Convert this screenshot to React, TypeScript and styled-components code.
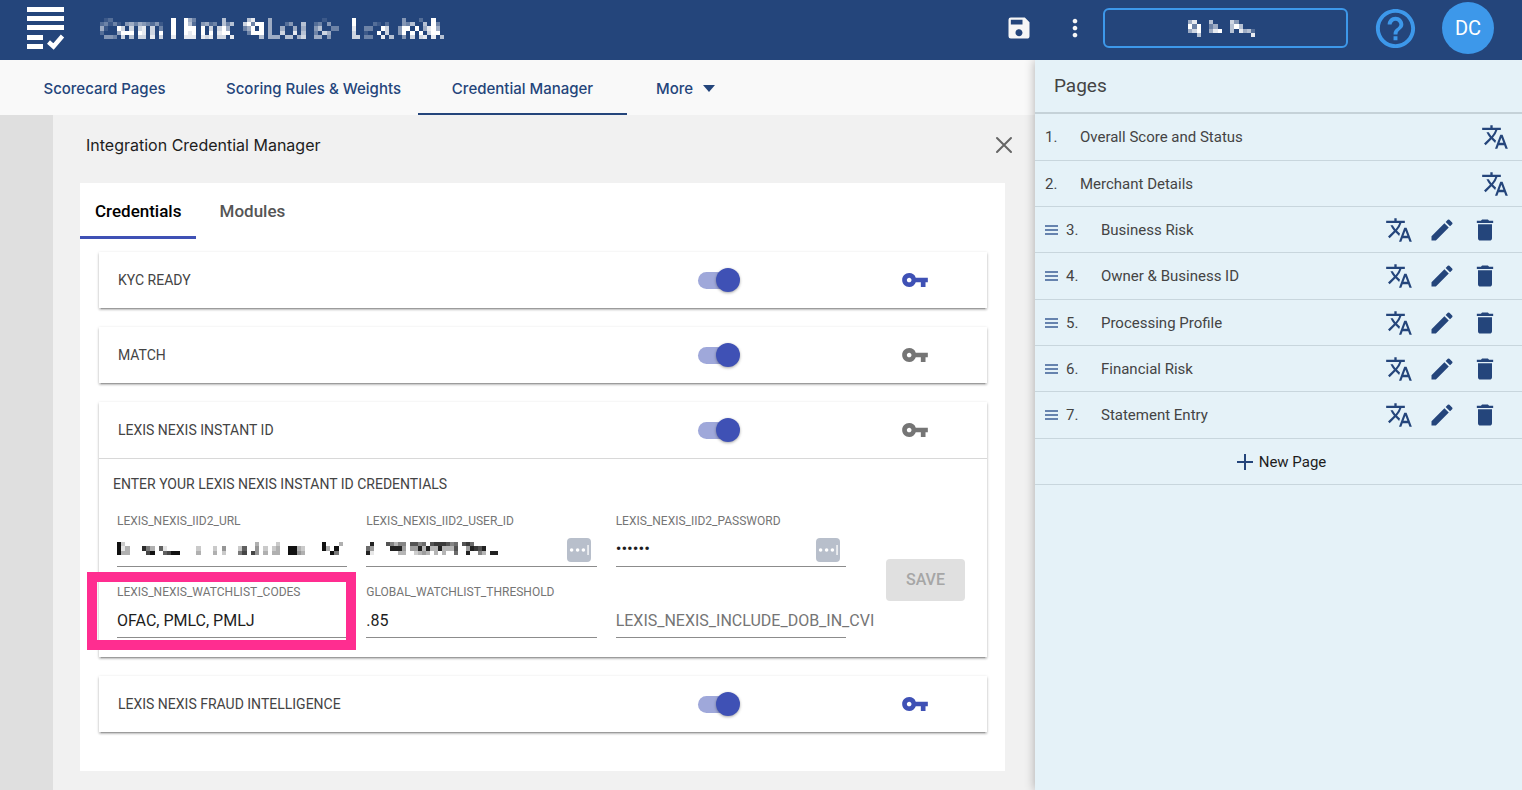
import React, { useState } from "react";
import styled, { createGlobalStyle, css } from "styled-components";
import {
  MdDelete,
  MdEdit,
  MdHelpOutline,
  MdMoreVert,
  MdSave,
  MdTranslate,
  MdVpnKey,
} from "react-icons/md";

const navy = "#24457b";
const sky = "#3d98ea";
const indigo = "#3f51b5";
const roboto = `Roboto, "Liberation Sans", sans-serif`;
const inter = `Inter, "Liberation Sans", sans-serif`;

const GlobalStyle = createGlobalStyle`
  *, *::before, *::after { box-sizing: border-box; }
  body { margin: 0; background: #f1f1f1; font-family: ${roboto}; color: #444; }
  button, input { font: inherit; color: inherit; margin: 0; }
  button { border: 0; padding: 0; background: none; cursor: pointer; }
`;

const Shell = styled.div`
  display: flex;
  flex-direction: column;
  min-height: 100vh;
`;

const TopBar = styled.header`
  position: relative;
  z-index: 2;
  display: flex;
  align-items: center;
  height: 60px;
  padding: 0 28px 4px 26px;
  background: ${navy};
  color: #fff;
`;

const Logo = styled.svg`
  width: 39px;
  height: 44px;
  flex: none;
`;

const Title = styled.h1`
  display: flex;
  margin: 0 auto 0 35px;
`;

const BarButton = styled.button<{ $gap: number }>`
  display: flex;
  margin-right: ${(p) => p.$gap}px;
  color: ${(p) => p.color ?? "#f6f6f6"};
`;

const OutlineButton = styled.button`
  display: flex;
  align-items: center;
  justify-content: center;
  width: 245px;
  height: 40px;
  margin-right: 24px;
  border: 2px solid ${sky};
  border-radius: 6px;
`;

const Avatar = styled.button`
  width: 52px;
  height: 52px;
  border-radius: 50%;
  background: ${sky};
  color: #fff;
  font-size: 20px;
`;

const Columns = styled.div`
  display: flex;
  flex: 1;
`;

const Workspace = styled.main`
  display: flex;
  flex-direction: column;
  flex: 1;
  min-width: 0;
`;

const NavTabs = styled.nav`
  display: flex;
  height: 55px;
  background: #f9f9f9;
  font: 500 15px ${inter};
  color: ${navy};
`;

const NavTab = styled.a<{ $active?: boolean }>`
  display: flex;
  align-items: center;
  justify-content: center;
  width: 209px;
  padding-top: 4px;
  border-bottom: 2px solid ${(p) => (p.$active ? navy : "transparent")};
  color: inherit;
  text-decoration: none;
`;

const MoreTab = styled.button`
  display: flex;
  align-items: center;
  gap: 10px;
  padding: 2px 0 0 29px;
`;

const WorkArea = styled.div`
  display: flex;
  flex: 1;
`;

const Gutter = styled.div`
  width: 53px;
  background: #dfdfdf;
`;

const Manager = styled.section`
  flex: 1;
  min-width: 0;
  padding: 0 30px 19px 27px;
`;

const ManagerHeader = styled.div`
  display: flex;
  align-items: center;
  justify-content: space-between;
  height: 68px;
  padding: 0 0 8px 6px;
  margin-right: -8px;
`;

const ManagerTitle = styled.h2`
  margin: 0;
  font: 400 16px ${inter};
  color: #1d1d1d;
`;

const Panel = styled.div`
  min-height: 588px;
  background: #fff;
`;

const PanelTabs = styled.div`
  display: flex;
  height: 56px;
`;

const PanelTab = styled.button<{ $active: boolean }>`
  min-width: 112px;
  padding: 2px 15px 0;
  border-bottom: 3px solid ${(p) => (p.$active ? indigo : "transparent")};
  font-size: 17px;
  font-weight: 500;
  color: ${(p) => (p.$active ? "#000" : "#555")};
`;

const CardList = styled.div`
  display: flex;
  flex-direction: column;
  gap: 19px;
  padding: 13px 18px 0 19px;
`;

const Card = styled.article`
  background: #fff;
  box-shadow:
    0 3px 1px -2px rgba(0, 0, 0, 0.2),
    0 2px 2px rgba(0, 0, 0, 0.14),
    0 1px 3px rgba(0, 0, 0, 0.2);
`;

const CardHeader = styled.div`
  display: grid;
  grid-template-columns: 1fr 203px 86px;
  align-items: center;
  height: 56px;
  padding-left: 19px;
`;

const CardName = styled.h3`
  margin: 0;
  font-size: 14px;
  font-weight: 400;
  color: #444;
`;

const Switch = styled.input.attrs({ type: "checkbox", role: "switch" })`
  appearance: none;
  display: flex;
  align-items: center;
  width: 40px;
  height: 17px;
  margin: 0;
  border-radius: 9px;
  background: #bbb;
  cursor: pointer;

  &::before {
    content: "";
    width: 24px;
    height: 24px;
    flex: none;
    border-radius: 50%;
    background: #fafafa;
    box-shadow: 0 1px 3px rgba(0, 0, 0, 0.35);
  }
  &:checked {
    background: #9fa8da;
  }
  &:checked::before {
    margin-left: 18px;
    background: ${indigo};
  }
`;

const KeyButton = styled.button<{ $on: boolean }>`
  display: flex;
  width: 28px;
  color: ${(p) => (p.$on ? indigo : "#757575")};
`;

const CardBody = styled.form`
  padding: 15px 22px 19px 18px;
  border-top: 1px solid #d8d8d8;
`;

const Prompt = styled.p`
  margin: 0 0 19px -4px;
  font-size: 14px;
  line-height: 20px;
  color: #444;
`;

const FormRow = styled.div`
  display: flex;
  align-items: center;
  gap: 40px;
`;

const Fields = styled.div`
  display: grid;
  flex: 1;
  grid-template-columns: repeat(3, 1fr);
  gap: 17px 19px;
`;

const Field = styled.div`
  position: relative;
  display: flex;
  flex-direction: column;
  min-width: 0;
  height: 54px;
  justify-content: flex-end;
`;

const FieldLabel = styled.label<{ $resting?: boolean }>`
  font-size: 12px;
  line-height: 16px;
  color: #757575;
  white-space: nowrap;
  ${(p) =>
    p.$resting &&
    css`
      position: absolute;
      left: 0;
      bottom: 7px;
      font-size: 16px;
      line-height: 20px;
      pointer-events: none;
    `}
`;

const FieldInput = styled.input`
  width: 100%;
  height: 38px;
  padding: 4px 0 0;
  border: 0;
  border-bottom: 1px solid #8c8c8c;
  outline: 0;
  background: transparent;
  font-size: 16px;
  color: #1d1d1d;
`;

const PasswordInput = styled(FieldInput)`
  padding: 0;
  font-size: 17px;
`;

const Masked = styled.div`
  position: absolute;
  left: 0;
  top: 27px;
`;

const Filler = styled.button`
  position: absolute;
  right: 6px;
  top: 25px;
  display: flex;
`;

const Highlight = styled.div`
  position: absolute;
  inset: -12px -9px -12px -30px;
  border: 10px solid #ff2d90;
  pointer-events: none;
`;

const SaveButton = styled.button`
  width: 79px;
  height: 42px;
  margin-top: 8px;
  border-radius: 4px;
  background: #e0e0e0;
  font-size: 16px;
  font-weight: 500;
  color: #a6a6a6;
`;

const PagesPanel = styled.aside`
  position: relative;
  width: 32%;
  background: #e5f2f8;
  box-shadow: 0 0 10px rgba(0, 0, 0, 0.3);
`;

const PagesTitle = styled.h2`
  margin: 0;
  padding: 0 19px;
  border-bottom: 2px solid #c5d2d8;
  font-size: 19px;
  font-weight: 400;
  line-height: 52px;
  color: #444;
`;

const PageList = styled.ul`
  margin: 0;
  padding: 0;
  list-style: none;
`;

const PageRow = styled.li<{ $fixed: boolean }>`
  display: flex;
  align-items: center;
  height: 46px;
  padding: 0 ${(p) => (p.$fixed ? 13 : 23)}px 0 10px;
  border-bottom: 1px solid #c8d6dd;
  font-size: 15px;

  &:nth-child(3n + 1) {
    height: 47px;
  }
`;

const Handle = styled.svg`
  width: 13px;
  height: 10px;
  margin-right: 8px;
`;

const PageNumber = styled.span`
  width: 35px;
`;

const PageName = styled.span`
  flex: 1;
`;

const PageActions = styled.div`
  display: flex;
  gap: 15px;
`;

const IconButton = styled.button`
  display: flex;
  color: ${navy};
`;

const NewPage = styled.button`
  display: flex;
  align-items: center;
  justify-content: center;
  gap: 6px;
  width: 100%;
  height: 46px;
  padding-left: 6px;
  border-bottom: 1px solid #c8d6dd;
  font-size: 15px;
  color: #1d1d1d;
`;

/* Redacted text: each digit is the strength of one block, 0 to 9; spaces only group the digits. */
type MosaicProps = { rows: string[]; color: string; width: number; height: number };

function Mosaic({ rows, color, width, height }: MosaicProps) {
  const grid = rows.map((row) => row.replaceAll(" ", ""));
  return (
    <svg
      width={width}
      height={height}
      viewBox={`0 0 ${grid[0].length} ${grid.length}`}
      preserveAspectRatio="none"
      shapeRendering="crispEdges"
      fill={color}
      aria-hidden="true"
    >
      {grid.flatMap((row, y) =>
        [...row].map((v, x) =>
          v > "0" ? (
            <rect key={`${x}-${y}`} x={x} y={y} width="1" height="1" opacity={Number(v) / 9} />
          ) : null
        )
      )}
    </svg>
  );
}

const titleRows = [
  "0120000000 0000000900 9530000006 0000068000 5000000000 0001000000 9000000000 0040002009 00",
  "2313104535 4324100900 9620452306 3600793990 5000240060 0230400000 9000021020 0043600609 30",
  "5100970707 8070300900 9990907079 5000359090 5005005050 0460033000 8003300970 0499090589 50",
  "2000599909 8070900900 9890909089 9000039990 5007008060 0307500000 7001009070 0490909079 90",
  "0443070607 7080700800 8880878077 0800000060 5550660570 0550400000 7703300806 0040707808 06",
];
const actionRows = [
  "0580006000 0740000000",
  "0939003500 0696000000",
  "0579005890 0608562000",
  "0006000000 0000008000",
];
const urlRows = [
  "9200000000 0000000000 0000000000 0003000020 0000000009 00030",
  "9130008530 6100000002 0002040002 6004020230 0993200009 30900",
  "9330000790 0679900003 0003020005 7074030330 0994300000 09500",
];
const userRows = [
  "0900075355 0775607888 7560786000 0000",
  "6400009994 0449393393 3370049879 0000",
  "9100000033 0023430303 0060090053 0990",
];

function TranslateButton() {
  return (
    <IconButton aria-label="Translate">
      <MdTranslate size={28} />
    </IconButton>
  );
}

const pages = [
  { name: "Overall Score and Status", fixed: true },
  { name: "Merchant Details", fixed: true },
  { name: "Business Risk", fixed: false },
  { name: "Owner & Business ID", fixed: false },
  { name: "Processing Profile", fixed: false },
  { name: "Financial Risk", fixed: false },
  { name: "Statement Entry", fixed: false },
];

function AutofillButton() {
  return (
    <Filler type="button" aria-label="Autofill">
      <svg width="24" height="24" viewBox="0 0 24 24">
        <rect width="24" height="24" rx="4" fill="#b8bfcb" />
        <circle cx="4.6" cy="12" r="1.8" fill="#fff" />
        <circle cx="10.6" cy="12" r="1.8" fill="#fff" />
        <circle cx="16.4" cy="12" r="1.8" fill="#fff" />
        <rect x="20.4" y="7" width="1.3" height="10" fill="#fff" />
      </svg>
    </Filler>
  );
}

function CredentialForm() {
  return (
    <CardBody onSubmit={(e) => e.preventDefault()}>
      <Prompt>ENTER YOUR LEXIS NEXIS INSTANT ID CREDENTIALS</Prompt>
      <FormRow>
        <Fields>
          <Field>
            <FieldLabel htmlFor="url">LEXIS_NEXIS_IID2_URL</FieldLabel>
            <FieldInput id="url" />
            <Masked>
              <Mosaic rows={urlRows} color="#111" width={230} height={13} />
            </Masked>
          </Field>
          <Field>
            <FieldLabel htmlFor="user">LEXIS_NEXIS_IID2_USER_ID</FieldLabel>
            <FieldInput id="user" />
            <Masked>
              <Mosaic rows={userRows} color="#222" width={136} height={13} />
            </Masked>
            <AutofillButton />
          </Field>
          <Field>
            <FieldLabel htmlFor="password">LEXIS_NEXIS_IID2_PASSWORD</FieldLabel>
            <PasswordInput id="password" type="password" defaultValue="secret" />
            <AutofillButton />
          </Field>
          <Field>
            <FieldLabel htmlFor="codes">LEXIS_NEXIS_WATCHLIST_CODES</FieldLabel>
            <FieldInput id="codes" defaultValue="OFAC, PMLC, PMLJ" />
            <Highlight />
          </Field>
          <Field>
            <FieldLabel htmlFor="threshold">GLOBAL_WATCHLIST_THRESHOLD</FieldLabel>
            <FieldInput id="threshold" defaultValue=".85" />
          </Field>
          <Field>
            <FieldLabel htmlFor="dob" $resting>
              LEXIS_NEXIS_INCLUDE_DOB_IN_CVI
            </FieldLabel>
            <FieldInput id="dob" />
          </Field>
        </Fields>
        <SaveButton disabled>SAVE</SaveButton>
      </FormRow>
    </CardBody>
  );
}

const integrations = [
  { name: "KYC READY", key: true, open: false },
  { name: "MATCH", key: false, open: false },
  { name: "LEXIS NEXIS INSTANT ID", key: false, open: true },
  { name: "LEXIS NEXIS FRAUD INTELLIGENCE", key: true, open: false },
];

export default function App() {
  const [tab, setTab] = useState("Credentials");
  return (
    <Shell>
      <GlobalStyle />
      <TopBar>
        <Logo viewBox="0 0 39 44" fill="#fff">
          <path d="M1 1h37v5H1zM1 10h37v5H1zM1 19h37v5H1zM1 29h16v5H1zM1 38h16v5H1z" />
          <path d="M22.5 36l5 4.500 9-10.500" fill="none" stroke="#fff" strokeWidth="4.400" />
        </Logo>
        <Title aria-label="Scorecard">
          <Mosaic rows={titleRows} color="#fff" width={344} height={21} />
        </Title>
        <BarButton $gap={28} aria-label="Save">
          <MdSave size={28} />
        </BarButton>
        <BarButton $gap={14} aria-label="More options">
          <MdMoreVert size={28} />
        </BarButton>
        <OutlineButton aria-label="Quick menu">
          <Mosaic rows={actionRows} color="#fff" width={84} height={17} />
        </OutlineButton>
        <BarButton $gap={23} color={sky} aria-label="Help">
          <MdHelpOutline size={47} />
        </BarButton>
        <Avatar>DC</Avatar>
      </TopBar>
      <Columns>
        <Workspace>
          <NavTabs>
            <NavTab href="#pages">Scorecard Pages</NavTab>
            <NavTab href="#rules">Scoring Rules &amp; Weights</NavTab>
            <NavTab href="#credentials" $active>
              Credential Manager
            </NavTab>
            <MoreTab>
              More
              <svg width="12" height="7" viewBox="0 0 12 7">
                <path d="M0 0h12L6 7z" fill={navy} />
              </svg>
            </MoreTab>
          </NavTabs>
          <WorkArea>
            <Gutter />
            <Manager>
              <ManagerHeader>
                <ManagerTitle>Integration Credential Manager</ManagerTitle>
                <IconButton aria-label="Close">
                  <svg width="18" height="18" viewBox="0 0 18 18">
                    <path
                      d="M2 2l14 14M16 2L2 16"
                      stroke="#666"
                      strokeWidth="2"
                      strokeLinecap="round"
                    />
                  </svg>
                </IconButton>
              </ManagerHeader>
              <Panel>
                <PanelTabs role="tablist">
                  {["Credentials", "Modules"].map((name) => (
                    <PanelTab
                      key={name}
                      role="tab"
                      aria-selected={tab === name}
                      $active={tab === name}
                      onClick={() => setTab(name)}
                    >
                      {name}
                    </PanelTab>
                  ))}
                </PanelTabs>
                <CardList>
                  {integrations.map((item) => (
                    <Card key={item.name}>
                      <CardHeader>
                        <CardName>{item.name}</CardName>
                        <Switch defaultChecked aria-label={item.name} />
                        <KeyButton $on={item.key} aria-label="Edit credentials">
                          <MdVpnKey size={28} />
                        </KeyButton>
                      </CardHeader>
                      {item.open && <CredentialForm />}
                    </Card>
                  ))}
                </CardList>
              </Panel>
            </Manager>
          </WorkArea>
        </Workspace>
        <PagesPanel>
          <PagesTitle>Pages</PagesTitle>
          <PageList>
            {pages.map((page, i) => (
              <PageRow key={page.name} $fixed={page.fixed}>
                {!page.fixed && (
                  <Handle viewBox="0 0 13 10">
                    <path d="M0 1h13M0 5h13M0 9h13" stroke="#3d5f95" strokeWidth="1.500" />
                  </Handle>
                )}
                <PageNumber>{i + 1}.</PageNumber>
                <PageName>{page.name}</PageName>
                <PageActions>
                  <TranslateButton />
                  {!page.fixed && (
                    <>
                      <IconButton aria-label="Edit">
                        <MdEdit size={28} />
                      </IconButton>
                      <IconButton aria-label="Delete">
                        <MdDelete size={28} />
                      </IconButton>
                    </>
                  )}
                </PageActions>
              </PageRow>
            ))}
          </PageList>
          <NewPage>
            <svg width="16" height="16" viewBox="0 0 16 16">
              <path d="M8 0v16M0 8h16" stroke={navy} strokeWidth="2" />
            </svg>
            New Page
          </NewPage>
        </PagesPanel>
      </Columns>
    </Shell>
  );
}
